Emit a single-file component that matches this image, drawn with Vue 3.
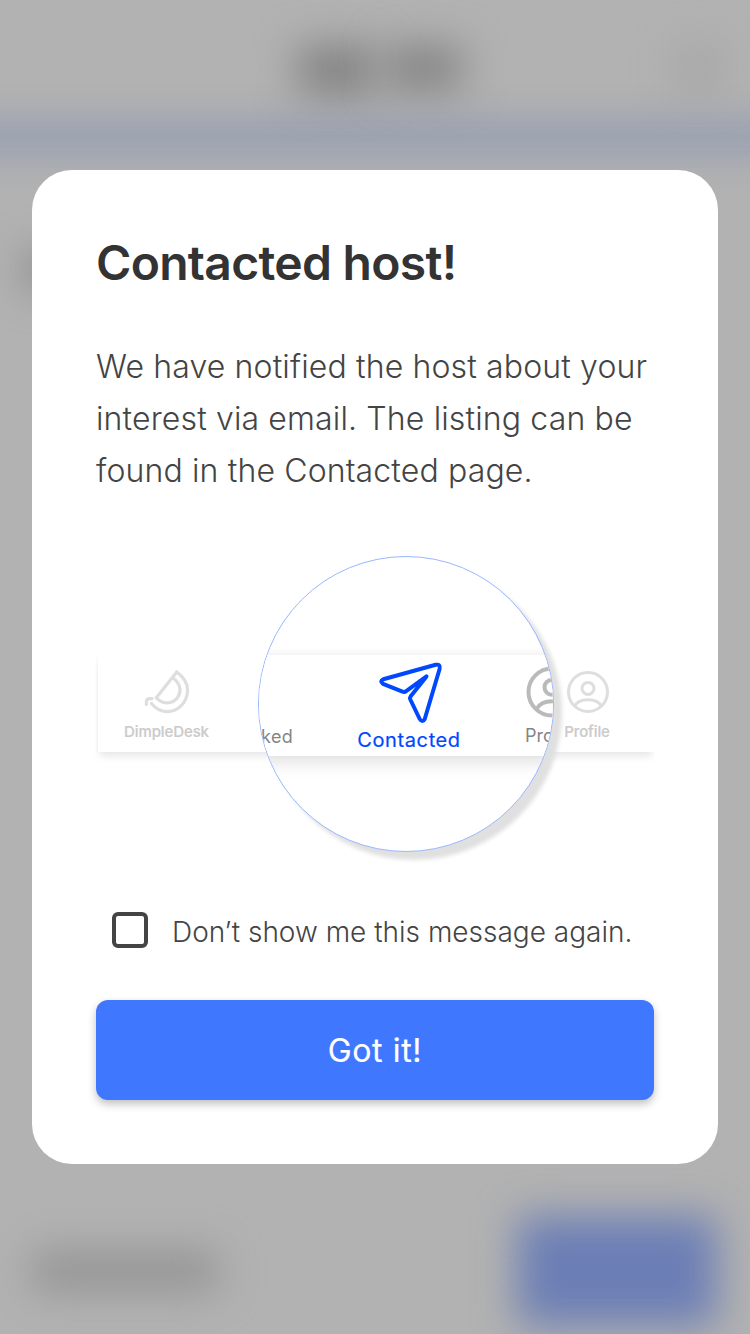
<script setup>
import { ref } from 'vue'

const dontShow = ref(false)
</script>

<template>
  <main class="screen">
    <div class="backdrop" aria-hidden="true">
      <i class="blob title-a"></i>
      <i class="blob title-b"></i>
      <i class="blob close"></i>
      <i class="blob rule"></i>
      <i class="blob side"></i>
      <i class="blob price"></i>
      <i class="blob cta"></i>
    </div>

    <section class="card" role="dialog">
      <h1>Contacted host!</h1>
      <p class="message">We have notified the host about your interest via email. The listing can be found in the Contacted page.</p>

      <div class="figure">
        <div class="tabbar">
          <div class="tab desk">
            <svg width="46" height="46" viewBox="0 0 46 46" fill="none" stroke="#dedede" stroke-width="3.200" stroke-linecap="round" stroke-linejoin="round">
              <path d="M32.800 3C41 9 45 17 43 26C40.500 37 31 43 23 42.600C16 42.300 11 39 7.500 34.500" />
              <path d="M32.800 3L12.300 28.800C16 33 21 34.500 26 33.500C33 32 37 25 35.800 19C35 15 32.500 11.500 29 9" />
              <path d="M2.300 35.500V33Q2.500 29.800 5.500 29.600H8" />
            </svg>
            <span>DimpleDesk</span>
          </div>
          <div class="tab profile">
            <svg width="46" height="46" viewBox="0 0 46 46" fill="none" stroke="#dedede" stroke-width="3">
              <circle cx="23" cy="23" r="19.500" />
              <circle cx="23" cy="19.400" r="6" />
              <path d="M9.500 37C14 28.500 32 28.500 36.500 37" />
            </svg>
            <span>Profile</span>
          </div>
        </div>

        <div class="lens">
          <div class="zoombar">
            <span class="liked">Liked</span>
            <div class="contacted">
              <svg width="66" height="66" viewBox="0 0 66 66" fill="none" stroke="#0048ff" stroke-width="4" stroke-linecap="round" stroke-linejoin="round">
                <path d="M6.300 21.200L58.700 6.800Q63.700 5.800 62.600 11L47.800 60.800Q45.600 65.300 42.700 61L33.300 41.500Q32.500 39.800 33.700 38.300L49.500 18.400L29.200 33.200Q27.500 34.500 25.500 33.700L6 25.800Q2.300 23.200 6.300 21.200Z" />
              </svg>
              <span>Contacted</span>
            </div>
            <div class="profile-zoom">
              <svg width="54" height="54" viewBox="0 0 54 54" fill="none" stroke="#bababa" stroke-width="4">
                <circle cx="27" cy="27" r="23.500" />
                <circle cx="27" cy="22.300" r="7.500" />
                <path d="M11.500 44C17 33.500 37 33.500 42.500 44" />
              </svg>
              <span>Profile</span>
            </div>
          </div>
        </div>
      </div>

      <label class="remember">
        <input v-model="dontShow" type="checkbox" />
        <span>Don’t show me this message again.</span>
      </label>
      <button type="button">Got it!</button>
    </section>
  </main>
</template>

<style>
body { background: #b2b2b2; }
</style>

<style scoped>
* { box-sizing: border-box; }
.screen {
  position: relative;
  height: 1334px;
  padding: 170px 32px;
  overflow: hidden;
  background: #b2b2b2;
  font-family: Inter, "Liberation Sans", sans-serif;
}
.backdrop { position: absolute; inset: 0; }
.blob { position: absolute; display: block; filter: blur(20px); }
.title-a { left: 298px; top: 46px; width: 78px; height: 48px; background: #818181; }
.title-b { left: 386px; top: 46px; width: 76px; height: 44px; background: #838383; }
.close { left: 678px; top: 48px; width: 42px; height: 40px; background: #a4a4a4; }
.rule { left: -60px; top: 134px; width: 870px; height: 7px; background: #2d53b2; }
.side { left: 26px; top: 252px; width: 40px; height: 36px; background: #858585; }
.price { left: 32px; top: 1252px; width: 186px; height: 38px; background: #929292; }
.cta { left: 518px; top: 1217px; width: 198px; height: 108px; background: #6b7eb5; }

.card {
  position: relative;
  display: flex;
  flex-direction: column;
  height: 994px;
  padding: 64px;
  border-radius: 40px;
  background: #fff;
}
h1 {
  margin: 0;
  color: #333;
  font-size: 48px;
  font-weight: 600;
  line-height: 58px;
  letter-spacing: -0.7px;
}
.message {
  margin: 49px 0 0;
  width: 566px;
  color: #444;
  font-size: 32px;
  font-weight: 300;
  line-height: 52px;
  letter-spacing: 0.14px;
}
.figure {
  position: relative;
  flex: none;
  height: 296px;
  margin-top: 59px;
  padding: 100px 0 0 2px;
}
.tabbar {
  display: flex;
  justify-content: space-between;
  height: 96px;
  padding: 12px 44px 0 26px;
  background: #fff;
  box-shadow: 0 6px 8px -2px #e6e6e6, -1px 0 2px #f6f6f6;
  clip-path: inset(0 0 -20px -3px);
}
.tab {
  display: flex;
  flex-direction: column;
  align-items: center;
  color: #cbcbcb;
  font-size: 15px;
  font-weight: 500;
  line-height: 20px;
}
.desk svg { position: relative; left: 1px; top: 1px; }
.profile svg { position: relative; left: 0.5px; top: 0.5px; }
.tab span { margin-top: 8px; letter-spacing: -0.1px; -webkit-text-stroke: 0.2px #cbcbcb; }
.lens {
  position: absolute;
  left: 162px;
  top: 0;
  width: 296px;
  height: 296px;
  border: 1px solid #9bb7ff;
  border-radius: 50%;
  background: #fff;
  overflow: hidden;
  box-shadow: 8px 8px 4px #e0e0e0;
}
.zoombar {
  position: relative;
  height: 101px;
  margin-top: 98px;
  box-shadow: 0 8px 16px -2px #dfdfdf, 0 -2px 8px #f5f5f5;
  background: #fff;
}
.liked, .profile-zoom { color: #858585; font-size: 18px; line-height: 22px; }
.liked { position: absolute; right: 260px; top: 71px; letter-spacing: 0.3px; }
.contacted {
  display: flex;
  flex-direction: column;
  align-items: center;
  width: 110px;
  margin-left: 95px;
  padding-top: 3px;
  color: #0048ff;
  font-size: 20px;
  font-weight: 400;
  line-height: 24px;
}
.contacted svg { position: relative; left: 0.5px; top: -0.5px; }
.contacted span { margin-top: 4px; letter-spacing: 0.6px; -webkit-text-stroke: 0.2px #0048ff; }
.profile-zoom { position: absolute; left: 266px; top: 10px; }
.profile-zoom svg { display: block; }
.profile-zoom span { display: block; margin-top: 6px; }
.remember {
  display: flex;
  align-items: center;
  height: 36px;
  margin: 60px 0 52px;
  padding-left: 16px;
  gap: 24px;
  color: #444;
  font-size: 28px;
  font-weight: 300;
  letter-spacing: 0;
  white-space: nowrap;
}
.remember input {
  flex: none;
  width: 36px;
  height: 36px;
  margin: 0;
  appearance: none;
  border: 4px solid #444;
  border-radius: 6px;
}
.remember span { padding-top: 4px; }
button {
  height: 100px;
  flex: none;
  padding: 1px 0 0;
  border: 0;
  border-radius: 12px;
  background: #4077ff;
  box-shadow: 0 4px 8px rgba(0, 0, 0, 0.25);
  color: #fff;
  font-family: inherit;
  font-size: 32px;
  font-weight: 400;
  letter-spacing: 0.64px;
  -webkit-text-stroke: 0.2px #fff;
}
</style>
